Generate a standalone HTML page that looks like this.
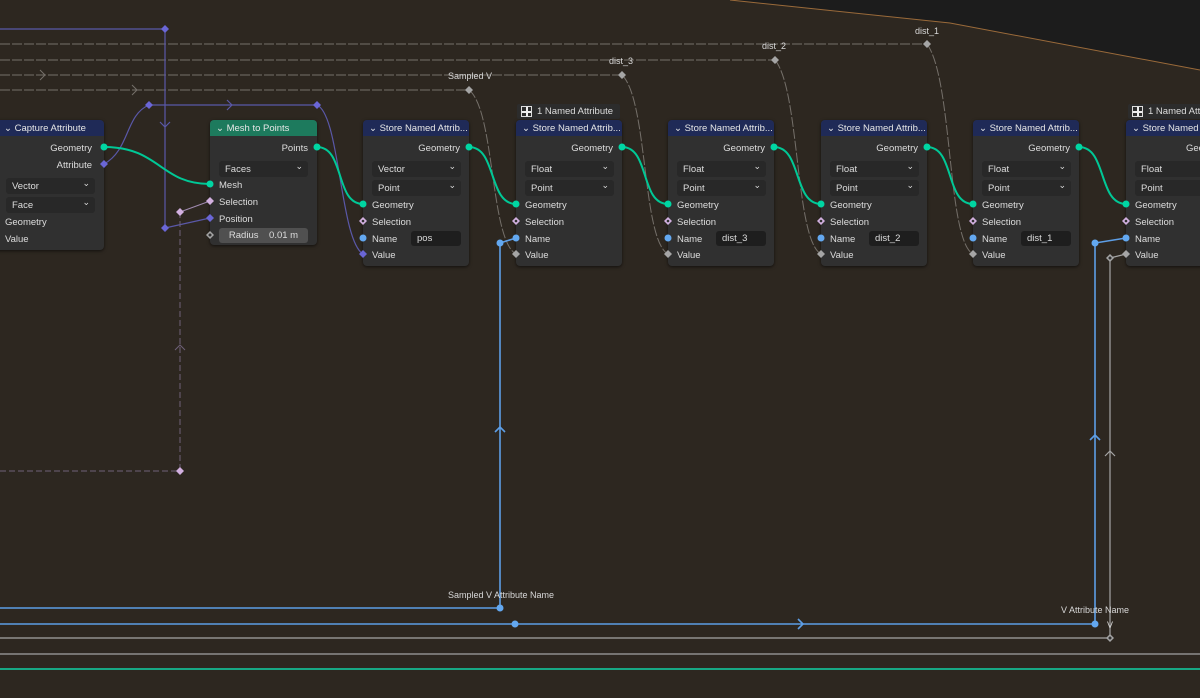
<!DOCTYPE html><html><head><style>
body{margin:0;width:1200px;height:698px;overflow:hidden;background:#2d2720;font-family:"Liberation Sans",sans-serif;position:relative}
svg{position:absolute;left:0;top:0}
.n{position:absolute;top:120px;width:106px;height:146px;background:#303030;border-radius:4px;box-shadow:0 1px 3px rgba(0,0,0,.6);font-size:9.5px;color:#ddd}
.h{height:16px;background:#1f2a57;border-radius:4px 4px 0 0;line-height:17px;padding-left:6px;font-size:9.5px;color:#e6e6e6;white-space:nowrap;overflow:hidden}
.r{position:absolute;white-space:nowrap;margin-top:1.5px}
.dd{position:absolute;left:9px;width:89px;height:16px;background:#282828;border-radius:3px;line-height:17px;box-sizing:border-box;padding-left:6px;margin-top:1px}
.dd:after{content:"⌄";position:absolute;right:5px;top:-3px;font-size:9px}
.f{position:absolute;left:48px;width:50px;height:15px;background:#1e1e1e;border-radius:3px;line-height:16px;padding-left:6px;box-sizing:border-box;margin-top:1px}
.lb{position:absolute;font-size:9px;color:#d8d8d8;white-space:nowrap}
.badge{position:absolute;top:104px;height:15px;width:103px;background:#2c2c2c;border-radius:2px;color:#ddd;font-size:9.5px;line-height:16px;padding-left:20px;box-sizing:border-box}
.badge:before{content:"";position:absolute;left:4px;top:2px;width:11px;height:11px;background:linear-gradient(#eee,#eee) 4px 0/2px 11px no-repeat,linear-gradient(#eee,#eee) 0 4px/11px 2px no-repeat;border:1px solid #ddd;box-sizing:border-box}
</style></head><body>
<svg width="1200" height="698">
<polygon points="730,0 950,23 1200,70 1200,0" fill="#1c1c1c"/>
<polyline points="730,0 950,23 1200,70" fill="none" stroke="#9a6a3a" stroke-width="1"/>
<g fill="none" stroke="#75706a" stroke-width="1" stroke-dasharray="10 2">
<line x1="0" y1="44" x2="927" y2="44"/><line x1="0" y1="60" x2="775" y2="60"/><line x1="0" y1="75" x2="622" y2="75"/><line x1="0" y1="90" x2="469" y2="90"/>
<path d="M469,90 C495,110 490,240 516,254"/><path d="M622,75 C648,100 642,240 668,254"/><path d="M775,60 C800,90 795,240 821,254"/><path d="M927,44 C953,80 947,240 973,254"/>
</g>
<g fill="none" stroke="#75706a" stroke-width="1"><path d="M40,70 l5,5 l-5,5"/><path d="M132,85 l5,5 l-5,5"/></g>
<g fill="none" stroke="#5a58a8" stroke-width="1.2">
<line x1="0" y1="29" x2="165" y2="29"/><line x1="165" y1="29" x2="165" y2="228"/><path d="M160,122 l5,5 l5,-5"/>
<line x1="149" y1="105" x2="317" y2="105"/><path d="M227,100 l5,5 l-5,5"/>
<path d="M104,164 C130,150 125,115 149,105"/>
<path d="M317,105 C340,115 340,240 363,254"/>
<path d="M165,228 L210,218"/>
</g>
<g fill="none" stroke="#6e6078" stroke-width="1" stroke-dasharray="6 3"><line x1="180" y1="212" x2="180" y2="471"/><line x1="0" y1="471" x2="180" y2="471"/></g>
<path d="M175,350 l5,-5 l5,5" fill="none" stroke="#6e6078"/>
<path d="M180,212 L210,201" stroke="#a08ab0" fill="none"/>
<g fill="none" stroke="#00c896" stroke-width="2">
<path d="M104,147 C160,147 160,184 210,184"/>
<path d="M317,147 C345,147 335,204 363,204"/><path d="M469,147 C497,147 488,204 516,204"/><path d="M622,147 C650,147 640,204 668,204"/><path d="M774,147 C802,147 793,204 821,204"/><path d="M927,147 C955,147 945,204 973,204"/><path d="M1079,147 C1107,147 1098,204 1126,204"/>
</g>
<g fill="none" stroke="#5d9ee6" stroke-width="1.6">
<path d="M0,608 H500 V243 L516,238"/><path d="M0,624 H1095 V243 L1126,238"/><path d="M495,432 l5,-5 l5,5"/><path d="M798,619 l5,5 l-5,5"/><path d="M1090,440 l5,-5 l5,5"/>
</g>
<g fill="none" stroke="#a5a5a5" stroke-width="1.2"><path d="M0,638 H1110 V258 L1126,254"/><path d="M1105,456 l5,-5 l5,5"/></g>
<line x1="0" y1="654" x2="1200" y2="654" stroke="#8e8e8e" stroke-width="1.5"/>
<line x1="0" y1="669" x2="1200" y2="669" stroke="#17a884" stroke-width="2"/>
</svg>
<div class="n" style="left:-10px;width:114px;height:130px"><div class="h" style="padding-left:14px">⌄ Capture Attribute</div>
<div class="r" style="right:12px;top:21px">Geometry</div><div class="r" style="right:12px;top:38px">Attribute</div>
<div class="dd" style="left:16px;top:57px">Vector</div><div class="dd" style="left:16px;top:76px">Face</div>
<div class="r" style="left:15px;top:95px">Geometry</div><div class="r" style="left:15px;top:112px">Value</div></div>
<div class="n" style="left:210px;width:107px;height:125px"><div class="h" style="background:#1d7a5d">⌄ Mesh to Points</div>
<div class="r" style="right:9px;top:21px">Points</div><div class="dd" style="top:40px">Faces</div>
<div class="r" style="left:9px;top:58px">Mesh</div><div class="r" style="left:9px;top:75px">Selection</div><div class="r" style="left:9px;top:92px">Position</div>
<div class="r" style="left:9px;top:106px;width:89px;height:15px;background:#505050;border-radius:3px;line-height:15px;text-align:center">Radius &nbsp;&nbsp; 0.01 m</div></div>
<div class="badge" style="left:517px">1 Named Attribute</div><div class="badge" style="left:1128px">1 Named Attribute</div>
<div class="n" style="left:363px"><div class="h">⌄ Store Named Attrib...</div><div class="r" style="right:9px;top:21px">Geometry</div><div class="dd" style="top:40px">Vector</div><div class="dd" style="top:59px">Point</div><div class="r" style="left:9px;top:78px">Geometry</div><div class="r" style="left:9px;top:95px">Selection</div><div class="r" style="left:9px;top:112px">Name</div><div class="f" style="top:110px">pos</div><div class="r" style="left:9px;top:128px">Value</div></div>
<div class="n" style="left:516px"><div class="h">⌄ Store Named Attrib...</div><div class="r" style="right:9px;top:21px">Geometry</div><div class="dd" style="top:40px">Float</div><div class="dd" style="top:59px">Point</div><div class="r" style="left:9px;top:78px">Geometry</div><div class="r" style="left:9px;top:95px">Selection</div><div class="r" style="left:9px;top:112px">Name</div><div class="r" style="left:9px;top:128px">Value</div></div>
<div class="n" style="left:668px"><div class="h">⌄ Store Named Attrib...</div><div class="r" style="right:9px;top:21px">Geometry</div><div class="dd" style="top:40px">Float</div><div class="dd" style="top:59px">Point</div><div class="r" style="left:9px;top:78px">Geometry</div><div class="r" style="left:9px;top:95px">Selection</div><div class="r" style="left:9px;top:112px">Name</div><div class="f" style="top:110px">dist_3</div><div class="r" style="left:9px;top:128px">Value</div></div>
<div class="n" style="left:821px"><div class="h">⌄ Store Named Attrib...</div><div class="r" style="right:9px;top:21px">Geometry</div><div class="dd" style="top:40px">Float</div><div class="dd" style="top:59px">Point</div><div class="r" style="left:9px;top:78px">Geometry</div><div class="r" style="left:9px;top:95px">Selection</div><div class="r" style="left:9px;top:112px">Name</div><div class="f" style="top:110px">dist_2</div><div class="r" style="left:9px;top:128px">Value</div></div>
<div class="n" style="left:973px"><div class="h">⌄ Store Named Attrib...</div><div class="r" style="right:9px;top:21px">Geometry</div><div class="dd" style="top:40px">Float</div><div class="dd" style="top:59px">Point</div><div class="r" style="left:9px;top:78px">Geometry</div><div class="r" style="left:9px;top:95px">Selection</div><div class="r" style="left:9px;top:112px">Name</div><div class="f" style="top:110px">dist_1</div><div class="r" style="left:9px;top:128px">Value</div></div>
<div class="n" style="left:1126px;width:90px"><div class="h">⌄ Store Named Attrib...</div><div class="r" style="left:60px;top:21px">Geometry</div><div class="dd" style="top:40px">Float</div><div class="dd" style="top:59px">Point</div><div class="r" style="left:9px;top:78px">Geometry</div><div class="r" style="left:9px;top:95px">Selection</div><div class="r" style="left:9px;top:112px">Name</div><div class="r" style="left:9px;top:128px">Value</div></div>
<div class="lb" style="left:448px;top:71px">Sampled V</div><div class="lb" style="left:609px;top:56px">dist_3</div><div class="lb" style="left:762px;top:41px">dist_2</div><div class="lb" style="left:915px;top:26px">dist_1</div>
<div class="lb" style="left:448px;top:590px">Sampled V Attribute Name</div><div class="lb" style="left:1061px;top:605px">V Attribute Name</div><div class="lb" style="left:1107px;top:620px">V</div>
<svg width="1200" height="698" style="pointer-events:none">
<defs>
<path id="d" d="M0,-4 L4,0 L0,4 L-4,0Z"/>
</defs>
<g fill="#00d6a3"><circle cx="104" cy="147" r="3.5"/><circle cx="317" cy="147" r="3.5"/><circle cx="210" cy="184" r="3.5"/>
<circle cx="469" cy="147" r="3.5"/><circle cx="622" cy="147" r="3.5"/><circle cx="774" cy="147" r="3.5"/><circle cx="927" cy="147" r="3.5"/><circle cx="1079" cy="147" r="3.5"/>
<circle cx="363" cy="204" r="3.5"/><circle cx="516" cy="204" r="3.5"/><circle cx="668" cy="204" r="3.5"/><circle cx="821" cy="204" r="3.5"/><circle cx="973" cy="204" r="3.5"/><circle cx="1126" cy="204" r="3.5"/></g>
<g fill="#6a66d6"><use href="#d" x="104" y="164"/><use href="#d" x="165" y="29"/><use href="#d" x="149" y="105"/><use href="#d" x="317" y="105"/><use href="#d" x="165" y="228"/><use href="#d" x="210" y="218"/><use href="#d" x="363" y="254"/></g>
<g fill="#d2b0e0"><use href="#d" x="180" y="212"/><use href="#d" x="210" y="201"/><use href="#d" x="180" y="471"/>
<use href="#d" x="363" y="221"/><use href="#d" x="516" y="221"/><use href="#d" x="668" y="221"/><use href="#d" x="821" y="221"/><use href="#d" x="973" y="221"/><use href="#d" x="1126" y="221"/></g>
<g fill="#303030"><circle cx="363" cy="221" r="1.3"/><circle cx="516" cy="221" r="1.3"/><circle cx="668" cy="221" r="1.3"/><circle cx="821" cy="221" r="1.3"/><circle cx="973" cy="221" r="1.3"/><circle cx="1126" cy="221" r="1.3"/></g>
<g fill="#a5a5a5"><use href="#d" x="469" y="90"/><use href="#d" x="622" y="75"/><use href="#d" x="775" y="60"/><use href="#d" x="927" y="44"/>
<use href="#d" x="516" y="254"/><use href="#d" x="668" y="254"/><use href="#d" x="821" y="254"/><use href="#d" x="973" y="254"/><use href="#d" x="1126" y="254"/><use href="#d" x="1110" y="258"/><use href="#d" x="1110" y="638"/><use href="#d" x="210" y="235"/></g>
<g fill="#303030"><circle cx="210" cy="235" r="1.5"/><circle cx="1110" cy="258" r="1.5"/><circle cx="1110" cy="638" r="1.5"/></g>
<g fill="#63a8f0"><circle cx="363" cy="238" r="3.5"/><circle cx="516" cy="238" r="3.5"/><circle cx="668" cy="238" r="3.5"/><circle cx="821" cy="238" r="3.5"/><circle cx="973" cy="238" r="3.5"/><circle cx="1126" cy="238" r="3.5"/>
<circle cx="500" cy="243" r="3.5"/><circle cx="1095" cy="243" r="3.5"/><circle cx="500" cy="608" r="3.5"/><circle cx="515" cy="624" r="3.5"/><circle cx="1095" cy="624" r="3.5"/></g>
</svg>
</body></html>
